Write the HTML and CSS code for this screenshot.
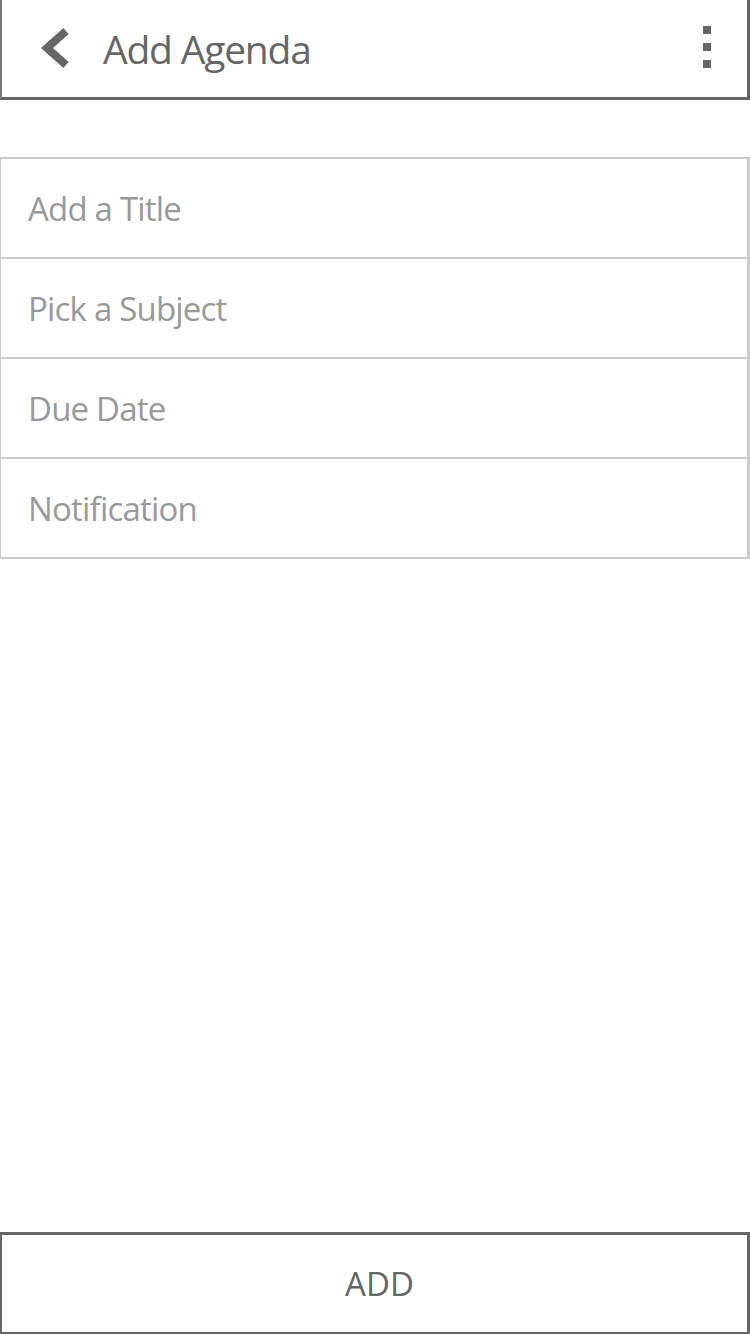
FILE: index.html
```html
<!DOCTYPE html>
<html>
<head>
<meta charset="utf-8">
<link rel="stylesheet" href="styles.css">
</head>
<body>
<div class="screen">
  <header class="topbar">
    <svg class="back" width="40" height="50" viewBox="0 0 40 50">
      <polyline points="30,8 11,25 30,42" fill="none" stroke="#666" stroke-width="8" stroke-linejoin="miter"/>
    </svg>
    <h1 class="title">Add Agenda</h1>
    <div class="more">
      <span class="dot"></span><span class="dot"></span><span class="dot"></span>
    </div>
  </header>
  <div class="fields">
    <div class="field">Add a Title</div>
    <div class="field">Pick a Subject</div>
    <div class="field">Due Date</div>
    <div class="field">Notification</div>
  </div>
  <div class="spacer"></div>
  <button class="add">ADD</button>
</div>
</body>
</html>
```
FILE: styles.css
```css
html, body {
  margin: 0;
  padding: 0;
  background: #fff;
}
.screen {
  width: 750px;
  height: 1334px;
  display: flex;
  flex-direction: column;
  font-family: "Open Sans", "Liberation Sans", sans-serif;
  box-sizing: border-box;
}
.topbar {
  height: 100px;
  box-sizing: border-box;
  border-left: 2px solid #777;
  border-right: 3px solid #666;
  border-bottom: 3px solid #666;
  display: flex;
  align-items: center;
  padding-left: 34px;
  padding-right: 36px;
}
.back {
  display: block;
  margin-top: -2px;
}
.title {
  margin: 0 0 0 27px;
  font-size: 39px;
  font-weight: 500;
  color: #666;
  flex: 1;
  letter-spacing: -1.2px;
}
.more {
  display: flex;
  flex-direction: column;
  gap: 9px;
  margin-top: -4px;
}
.dot {
  width: 8px;
  height: 8px;
  background: #666;
  display: block;
}
.fields {
  margin-top: 57px;
  border-left: 1px solid #ccc;
  border-right: 3px solid #ccc;
  border-bottom: 2px solid #ccc;
}
.field {
  height: 98px;
  border-top: 2px solid #ccc;
  display: flex;
  align-items: center;
  padding-left: 27px;
  font-size: 33px;
  color: #999;
  letter-spacing: -0.8px;
}
.spacer {
  flex: 1;
}
.add {
  height: 102px;
  box-sizing: border-box;
  border-top: 3px solid #666;
  border-bottom: 2px solid #666;
  border-left: 2px solid #666;
  border-right: 3px solid #666;
  background: #fff;
  font-family: "Open Sans", "Liberation Sans", sans-serif;
  font-size: 33px;
  color: #666;
  padding: 0 0 0 10px;
  margin: 0;
}
```
